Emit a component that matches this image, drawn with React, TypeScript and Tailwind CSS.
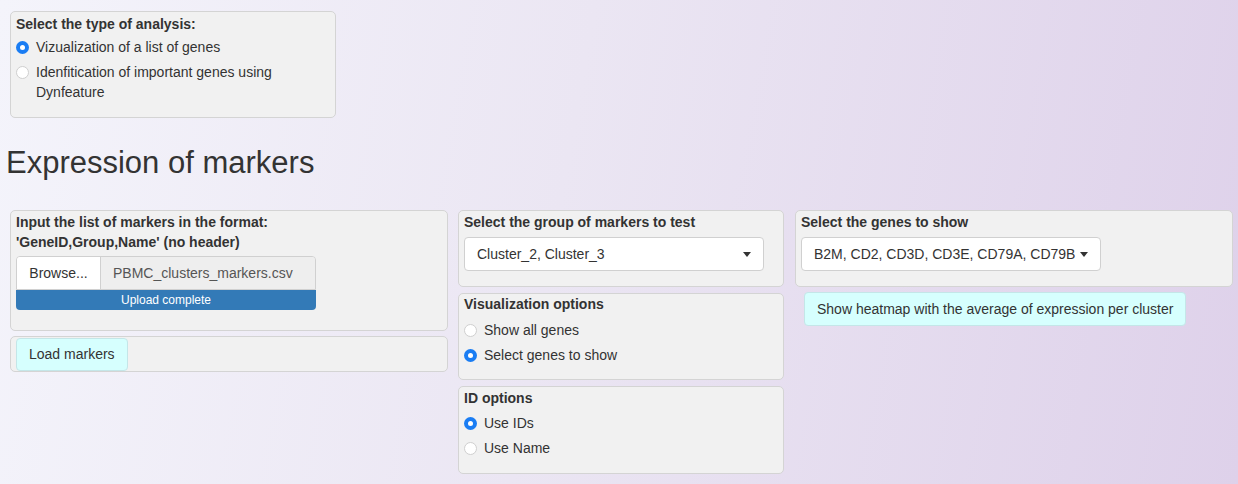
import { ReactNode } from "react";

const well = "bg-[#f1f1f1] border border-[#d4d4d4] rounded-[5px]";
const title = "font-bold text-[14px] leading-5 text-[#333]";
const cyanBtn = "bg-[#d6fffe] border border-[#c4e6e8] rounded-[4px] text-[14px] text-[#333]";

function Radio({ checked, children }: { checked?: boolean; children: ReactNode }) {
  return (
    <div className="flex items-start gap-[7px] leading-5">
      {checked ? (
        <span className="mt-[4px] w-[13px] h-[13px] shrink-0 rounded-full bg-[#1a7df3] flex items-center justify-center">
          <span className="w-[5px] h-[5px] rounded-full bg-white" />
        </span>
      ) : (
        <span className="mt-[4px] w-[13px] h-[13px] shrink-0 rounded-full bg-white border border-[#cfcfcf]" />
      )}
      <span>{children}</span>
    </div>
  );
}

function Caret() {
  return (
    <svg width="8" height="5" viewBox="0 0 8 5" className="shrink-0">
      <path d="M0 0h8L4 5z" fill="#333" />
    </svg>
  );
}

function SelectBox({ text }: { text: string }) {
  return (
    <div className="w-[300px] h-[34px] bg-white border border-[#d0d0d0] rounded-[4px] flex items-center pl-[12px] pr-[12px] gap-[4px]">
      <span className="flex-1 whitespace-nowrap">{text}</span>
      <Caret />
    </div>
  );
}

export default function App() {
  return (
    <div className="w-[1238px] h-[484px] overflow-hidden bg-[linear-gradient(100deg,#f4f4fb_0%,#ebe6f3_45%,#ded1ea_100%)] font-['Liberation_Sans',Arial,sans-serif] text-[14px] text-[#333] pt-[11px]">
      <div className={`${well} ml-[10px] w-[326px] h-[107px] px-[5px] pt-[2px]`}>
        <div className={title}>Select the type of analysis:</div>
        <div className="mt-[3px] flex flex-col gap-[5px]">
          <Radio checked>Vizualization of a list of genes</Radio>
          <Radio>
            Idenfitication of important genes using
            <br />
            Dynfeature
          </Radio>
        </div>
      </div>

      <h1 className="ml-[6px] mt-[25px] text-[31px] leading-[40px] font-normal text-[#333]">
        Expression of markers
      </h1>

      <div className="mt-[27px] flex items-start ml-[10px]">
        <div className="w-[438px] flex flex-col gap-[5px]">
          <div className={`${well} h-[121px] px-[5px] pt-[1px]`}>
            <div className={title}>
              Input the list of markers in the format:
              <br />
              'GeneID,Group,Name' (no header)
            </div>
            <div className="mt-[4px] w-[300px]">
              <div className="flex h-[34px] border border-[#d0d0d0] rounded-t-[4px] overflow-hidden">
                <div className="w-[84px] bg-white flex items-center justify-center border-r border-[#d0d0d0]">Browse...</div>
                <div className="flex-1 bg-[#eeeeee] flex items-center pl-[12px] text-[#555]">PBMC_clusters_markers.csv</div>
              </div>
              <div className="h-[20px] bg-[#337ab7] rounded-b-[4px] text-white text-[12px] leading-5 text-center">
                Upload complete
              </div>
            </div>
          </div>
          <div className={`${well} h-[36px] px-[5px] pt-[1px]`}>
            <button className={`${cyanBtn} h-[33px] px-[12px]`}>Load markers</button>
          </div>
        </div>

        <div className="ml-[10px] w-[326px] flex flex-col gap-[6px]">
          <div className={`${well} h-[77px] px-[5px] pt-[1px]`}>
            <div className={title}>Select the group of markers to test</div>
            <div className="mt-[5px]">
              <SelectBox text="Cluster_2, Cluster_3" />
            </div>
          </div>
          <div className={`${well} h-[87px] px-[5px] pt-[0px]`}>
            <div className={title}>Visualization options</div>
            <div className="mt-[6px] flex flex-col gap-[5px]">
              <Radio>Show all genes</Radio>
              <Radio checked>Select genes to show</Radio>
            </div>
          </div>
          <div className={`${well} h-[88px] px-[5px] pt-[1px]`}>
            <div className={title}>ID options</div>
            <div className="mt-[5px] flex flex-col gap-[5px]">
              <Radio checked>Use IDs</Radio>
              <Radio>Use Name</Radio>
            </div>
          </div>
        </div>

        <div className="ml-[11px] w-[438px] flex flex-col">
          <div className={`${well} h-[77px] px-[5px] pt-[1px]`}>
            <div className={title}>Select the genes to show</div>
            <div className="mt-[5px]">
              <SelectBox text="B2M, CD2, CD3D, CD3E, CD79A, CD79B" />
            </div>
          </div>
          <div className="mt-[5px] ml-[9px]">
            <button className={`${cyanBtn} h-[34px] px-[12px]`}>
              Show heatmap with the average of expression per cluster
            </button>
          </div>
        </div>
      </div>
    </div>
  );
}
